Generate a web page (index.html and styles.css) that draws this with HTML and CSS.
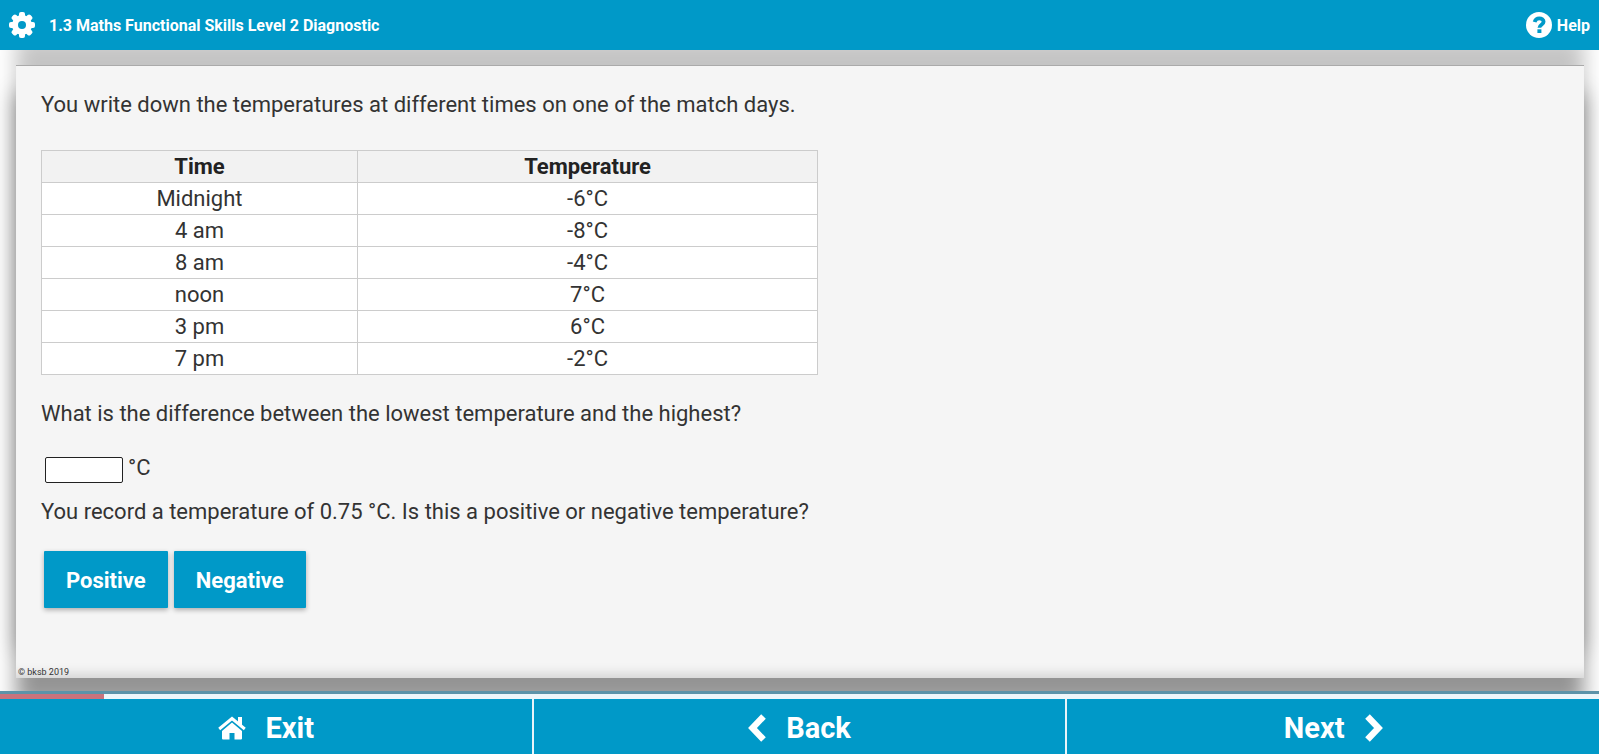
FILE: index.html
```
<!DOCTYPE html>
<html lang="en">
<head>
    <meta charset="UTF-8">
    <meta name="viewport" content="width=device-width, initial-scale=1.0">
    <title>1.3 Maths Functional Skills Level 2 Diagnostic</title>
    <link rel="stylesheet" href="styles.css">
</head>
<body>
    <header class="topbar">
        <button class="topbar-btn" type="button" aria-label="Settings">
            <svg width="28" height="26" viewBox="0 0 26 26" aria-hidden="true">
                <g fill="#fff">
                    <rect x="10" y="0" width="6" height="26" rx="2"/>
                    <rect x="10" y="0" width="6" height="26" rx="2" transform="rotate(45 13 13)"/>
                    <rect x="10" y="0" width="6" height="26" rx="2" transform="rotate(90 13 13)"/>
                    <rect x="10" y="0" width="6" height="26" rx="2" transform="rotate(135 13 13)"/>
                    <circle cx="13" cy="13" r="10"/>
                </g>
                <circle cx="13" cy="13" r="4" fill="#0099c8"/>
            </svg>
        </button>
        <h1 class="title">1.3 Maths Functional Skills Level 2 Diagnostic</h1>
        <button class="topbar-btn help" type="button">
            <svg width="26" height="26" viewBox="0 0 26 26" aria-hidden="true">
                <circle cx="13" cy="13" r="13" fill="#fff"/>
                <path d="M8.600 10C9.400 7.400 11 6.300 13.200 6.300c2.500 0 4.400 1.400 4.400 3.400 0 3-4.200 3-4.200 6" fill="none" stroke="#0099c8" stroke-width="3.800"/>
                <rect x="11.400" y="17.300" width="4" height="3.700" fill="#0099c8"/>
            </svg>
            Help
        </button>
    </header>

    <main class="panel">
        <form class="question" id="question">
            <p class="intro">You write down the temperatures at different times on one of the match days.</p>

            <table class="temps">
                <thead>
                    <tr><th class="time-col" scope="col">Time</th><th scope="col">Temperature</th></tr>
                </thead>
                <tbody>
                    <tr><td>Midnight</td><td>-6°C</td></tr>
                    <tr><td>4 am</td><td>-8°C</td></tr>
                    <tr><td>8 am</td><td>-4°C</td></tr>
                    <tr><td>noon</td><td>7°C</td></tr>
                    <tr><td>3 pm</td><td>6°C</td></tr>
                    <tr><td>7 pm</td><td>-2°C</td></tr>
                </tbody>
            </table>

            <p class="ask"><label for="difference">What is the difference between the lowest temperature and the highest?</label></p>
            <div class="answer">
                <input class="answer-box" type="text" id="difference" autocomplete="off">
                <span>°C</span>
            </div>

            <p class="ask-sign">You record a temperature of 0.75 °C. Is this a positive or negative temperature?</p>
            <div class="choices">
                <button class="choice" type="button">Positive</button>
                <button class="choice" type="button">Negative</button>
            </div>
        </form>
        <small class="copyright">© bksb 2019</small>
    </main>

    <footer class="bottom">
        <div class="progress"><div class="progress-bar" style="width: 6.5%"></div></div>
        <nav class="nav">
            <button class="nav-btn" type="button">
                <svg width="28" height="24" viewBox="0 0 28 24" aria-hidden="true">
                    <path d="M14 6.500L24 15v7.500a1 1 0 0 1-1 1h-6.500V17h-5v6.500H5a1 1 0 0 1-1-1V15z" fill="#fff"/>
                    <path d="M1.200 13L14 2.500 26.800 13" fill="none" stroke="#fff" stroke-width="3"/>
                    <path d="M20 1h4v9l-4-3.500z" fill="#fff"/>
                </svg>
                Exit
            </button>
            <button class="nav-btn" type="button">
                <svg width="18" height="28" viewBox="0 0 18 28" aria-hidden="true">
                    <path d="M15.500 2.500L4.500 14l11 11.500" fill="none" stroke="#fff" stroke-width="6.400"/>
                </svg>
                Back
            </button>
            <button class="nav-btn" type="button">
                Next
                <svg width="18" height="28" viewBox="0 0 18 28" aria-hidden="true">
                    <path d="M2.500 2.500L13.500 14l-11 11.500" fill="none" stroke="#fff" stroke-width="6.400"/>
                </svg>
            </button>
        </nav>
    </footer>
</body>
</html>
```
FILE: styles.css
```
* {
    box-sizing: border-box;
}

body {
    font-family: Roboto, 'Liberation Sans', sans-serif;
    font-size: 22px;
    line-height: 30px;
    color: #333;
    display: flex;
    flex-direction: column;
    min-height: 100vh;
    margin: 0;
    background-color: #fff;
}

p {
    margin: 0;
}

button {
    font-family: inherit;
    font-weight: bold;
    color: #fff;
    border: none;
    cursor: pointer;
}

.topbar {
    position: relative;
    display: flex;
    align-items: center;
    gap: 13px;
    height: 50px;
    padding: 0 9px 0 8px;
    background-color: #0099c8;
}

.topbar-btn {
    display: flex;
    align-items: center;
    gap: 5px;
    padding: 0;
    background: none;
    font-size: 16px;
}

.title {
    flex: 1;
    margin: 0;
    font-size: 16px;
    line-height: 32px;
    padding-top: 2px;
    color: #fff;
}

.panel {
    flex: 1;
    display: flex;
    flex-direction: column;
    justify-content: space-between;
    margin: 15px 15px 13px 16px;
    background-color: #f5f5f5;
    box-shadow: 0 -28px 20px rgba(0, 0, 0, 0.23),
        0 28px 20px rgba(0, 0, 0, 0.42),
        inset 0 -14px 12px -10px rgba(0, 0, 0, 0.14),
        inset 0 1px 0 #aaa;
}

.question {
    padding: 25px 25px 0;
}

.temps {
    width: 51.2%;
    margin: 30px 0 24px;
    border-collapse: collapse;
    table-layout: fixed;
    background-color: #fff;
    text-align: center;
}

.temps th,
.temps td {
    height: 32px;
    padding: 0;
    border: 1px solid #ccc;
}

.temps th {
    background-color: #f2f2f2;
    color: #222;
}

.temps .time-col {
    width: 40.7%;
}

.answer {
    display: flex;
    align-items: flex-end;
    gap: 5px;
    margin: 24px 4px 14px;
}

.answer-box {
    width: 78px;
    height: 26px;
    padding: 0 4px;
    border: 1px solid #222;
    border-radius: 2px;
    background-color: #fff;
    font: inherit;
}

.choices {
    display: flex;
    gap: 6px;
    margin: 24px 3px;
}

.choice {
    padding: 15px 22px 13px;
    background-color: #0099c8;
    font-size: 22px;
    line-height: 29px;
    border-radius: 1px;
    box-shadow: 0 2px 5px rgba(0, 0, 0, 0.3);
}

.copyright {
    padding: 0 2px;
    font-size: 9px;
    line-height: 12px;
}

.bottom {
    position: relative;
    border-top: 3px solid #5c93a9;
    background-color: #0099c8;
}

.progress {
    height: 5px;
    background-color: #eef6fa;
}

.progress-bar {
    height: 100%;
    background-color: #c9737c;
}

.nav {
    display: flex;
}

.nav-btn {
    flex: 1;
    display: flex;
    align-items: center;
    justify-content: center;
    gap: 20px;
    height: 55px;
    padding: 2px 6px 0;
    background-color: #0099c8;
    font-size: 29px;
}

.nav-btn + .nav-btn {
    border-left: 2px solid #e8f4f9;
}
```
